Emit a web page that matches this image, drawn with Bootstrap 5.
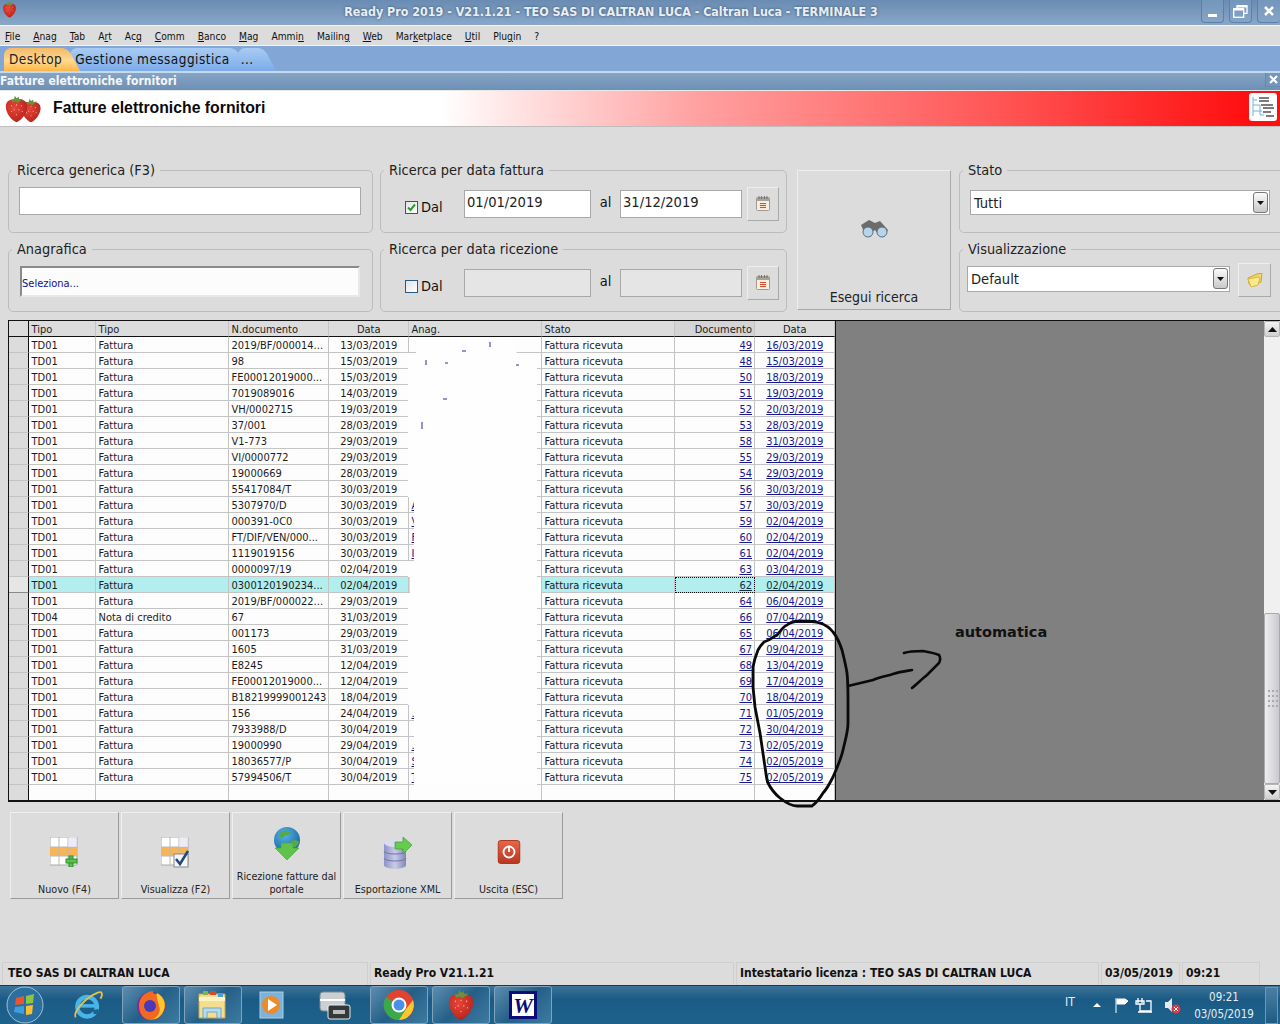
<!DOCTYPE html>
<html lang="it">
<head>
<meta charset="UTF-8">
<meta name="viewport" content="width=device-width, initial-scale=1">
<title>Ready Pro 2019 - Fatture elettroniche fornitori</title>
<link href="https://cdn.jsdelivr.net/npm/bootstrap@5.3.2/dist/css/bootstrap.min.css" rel="stylesheet">
<style>
  html, body { margin: 0; height: 100%; overflow: hidden; }
  body { background: #dcdcdc; color: #111; font-family: "DejaVu Sans Condensed", "DejaVu Sans", sans-serif; font-stretch: condensed; font-size: 11px; }
  .app { position: relative; width: 1280px; height: 1024px; overflow: hidden; }

  /* barra titolo */
  .titlebar { height: 25px; background: linear-gradient(#6a8cb2, #8aa7c8); position: relative; }
  .titlebar .app-icon { position: absolute; left: 2px; top: 1px; }
  .titlebar .caption { width: 1222px; text-align: center; color: #e9eef3; font: bold 12.4px/24px "DejaVu Sans Condensed", "DejaVu Sans", sans-serif; text-shadow: 0 0 3px #33506f; }
  .win-btns { position: absolute; right: 0; top: 0; gap: 5px; }
  .win-btns span { width: 23px; height: 23px; border: 1px solid #5f80a4; border-top: 0; border-radius: 0 0 4px 4px; background: linear-gradient(#7396bb, #86a4c6); display: flex; align-items: center; justify-content: center; }

  .menubar { height: 21px; background: #dcdcdc; border-top: 1px solid #f4f4f4; border-bottom: 1px solid #f4f4f4; padding: 1px 0 0 5px; gap: 13px; font-size: 10.2px; line-height: 19px; }
  .menubar u { text-underline-offset: 1px; }

  .tabbar { height: 25px; background: #82a6d5; padding: 2px 0 0 4px; }
  .tabbar .tab { position: relative; height: 23px; padding: 0 5px; margin-right: 3px; border-radius: 7px 8px 0 0; font: 13.5px/23px "DejaVu Sans Condensed", "DejaVu Sans", sans-serif; letter-spacing: .45px; background: linear-gradient(#a8ccf2, #7cabea); }
  .tabbar .tab::after { content: ""; position: absolute; top: 0; right: -7px; width: 14px; height: 23px; background: inherit; border-top-right-radius: 6px; transform: skewX(28deg); z-index: 0; }
  .tabbar .tab span { position: relative; z-index: 1; }
  .tabbar .tab.active { background: linear-gradient(#f2b968, #ffd98f 55%, #fdb748); z-index: 2; color: #222; }
  .tabbar .tab.more { width: 25px; padding-left: 3px; }
  .sep-light { height: 2px; background: #c5d8ec; }

  .formbar { height: 18px; background: linear-gradient(#86a4c5, #6c90b5); color: #f4f6f8; font-weight: bold; font-size: 12px; line-height: 17px; position: relative; border-bottom: 1px solid #e9e9e9; }
  .formbar .close-x { position: absolute; right: 0; top: 0; width: 15px; height: 14px; display: flex; align-items: center; justify-content: center; background: #7696b9; border: 1px solid #6688ac; border-right: 0; border-top: 0; }

  .formhead { height: 36px; padding-left: 4px; background: linear-gradient(90deg, #fff 0, #fff 440px, #ffa0a0 700px, #ff5555 1000px, #ff1010 1245px); border-bottom: 1px solid #bdbdbd; position: relative; }
  .formhead h1 { margin: -2px 0 0 11px; font: bold 15.8px/1 "Liberation Sans", Arial, sans-serif; color: #0b0b0b; }
  .formhead .tree { position: absolute; right: 3px; top: 2px; background: #fff; border-radius: 3px; }

  /* filtri */
  .filters { padding: 34px 0 0 8px; gap: 7px; height: 193px; }
  .filters .c1 { width: 365px; flex: none; }
  .filters .c2 { width: 407px; flex: none; }
  .filters .c4 { width: 340px; flex: none; }
  .group { border: 1px solid #bcbcbc; border-radius: 5px; height: 72px; margin: 0 0 7px; padding: 8px 0 0 10px; min-width: 0; }
  .group legend { float: none; width: auto; margin: 0 0 0 -7px; padding: 0 5px 0 5px; font-size: 14.4px; line-height: 18px; color: #222; }
  .field { height: 28px; border: 1px solid #a8a8a8; border-radius: 0; padding: 0 2px; background: #fff; font-size: 14.6px; color: #222; box-shadow: none; }
  .field:disabled { background: #e5e5e5; }
  .field.wide { width: 342px; }
  .field.inset { width: 340px; height: 31px; margin: 0 0 0 1px; border: 2px solid #e8e8e8; border-top-color: #8a8a8a; border-left-color: #8a8a8a; font-size: 11px; color: #10108a; background: #fcfcfc; line-height: 31px; padding: 0; }
  .dates { padding-left: 14px; }
  .dates .chk { width: 59px; margin-top: 11px; gap: 3px; font-size: 14.5px; line-height: 18px; }
  .chkbox { width: 13px; height: 13px; flex: none; border: 1px solid #2c5a7c; background: linear-gradient(135deg, #dfe3e8, #fff); display: flex; align-items: center; justify-content: center; }
  .dates .field { margin-top: 3px; }
  .dates .f1 { width: 127px; padding-bottom: 5px; }
  .dates .f2 { width: 122px; padding-bottom: 5px; }
  .dates .al { width: 29px; text-align: center; font-size: 14.5px; line-height: 24px; margin-top: 3px; }
  .raised { background: #dcdcdc; border: 1px solid; border-color: #eee #a9a9a9 #a9a9a9 #eee; padding: 0; border-radius: 0; color: #222; }
  .cal { width: 32px; height: 34px; margin-left: 5px; padding-bottom: 2px; display: flex; align-items: center; justify-content: center; }
  .search { width: 154px; height: 140px; margin: 9px 1px 0 3px; font-size: 14px; position: relative; flex: none; padding-bottom: 1px; }
  .search svg { position: absolute; left: 61px; top: 48px; }
  .combo { height: 25px; width: 300px; margin: 3px 0 0 0; border: 1px solid #a8a8a8; background: #fff; padding-left: 3px; font-size: 14.6px; line-height: 24px; justify-content: space-between; color: #222; }
  .combo .drop { width: 15px; height: 21px; margin: 1px 1px 0 0; border: 1px solid #777; border-radius: 3px; background: linear-gradient(#fafafa, #c9c9c9); display: flex; align-items: center; justify-content: center; }
  .combo.view { width: 263px; height: 26px; margin: 0; }
  .c4 .group { padding-left: 10px; }
  .c4 .group.v { padding-left: 7px; }
  .c4 .group.v legend { margin-left: -4px; }
  .folder { width: 33px; height: 34px; margin: -3px 0 0 8px; display: flex; align-items: center; justify-content: center; }

  /* griglia */
  .grid { height: 482px; margin-left: 8px; border: 1px solid #111; border-right: 0; border-bottom-width: 2px; }
  .grid .table { width: 826px; table-layout: fixed; margin: 0; border-collapse: separate; border-spacing: 0; --bs-table-bg: #fdfdfd; --bs-table-color: #1c1c1c; font-size: 11px; flex: none; }
  .grid th, .grid td { height: 16px; padding: 2px 2px 0 2.5px; line-height: 13px; font-weight: normal; border: 0; border-right: 1px solid #c4c4c4; border-bottom: 1px solid #c4c4c4; white-space: nowrap; overflow: hidden; }
  .grid thead th { background: #dcdcdc; border-bottom: 1px solid #111; border-right-color: #c4c4c4; }
  .grid .rh, .grid thead th.rh { background: #dcdcdc; border-right: 1px solid #111; padding: 0; }
  .grid .doc-head { background: #d4d4d4; }
  .grid a { color: #17178f; }
  .grid td.anag a { text-decoration: underline; }
  .grid tr.sel td { background: #b2eeee; }
  .grid tr.sel td.rh { background: #e6e6e6; border-bottom-color: #888; }
  .grid tr.sel a { color: #0c3040; }
  .grid td.focus { outline: 1px dotted #111; outline-offset: -1px; }
  .grid .blank td { height: 16px; border-bottom: 0; }
  .grid .tw { flex: none; overflow: hidden; }
  .rest { background: #808080; border-left: 1px solid #111; padding: 302px 0 0 119px; font: bold 14.5px/18px "DejaVu Sans", sans-serif; color: #111; }
  .vscroll { width: 16px; flex: none; background: #f0f0f0; }
  .vscroll .arrow { height: 16px; background: linear-gradient(#f4f4f4, #cfcfcf); border: 1px solid #b5b5b5; border-radius: 2px; display: flex; align-items: center; justify-content: center; }
  .vscroll .thumb { height: 171px; background: linear-gradient(90deg, #eeeef0, #c9c9d0); border: 1px solid #aaa; border-radius: 2px; display: flex; align-items: center; justify-content: center; }

  /* pulsanti */
  .actions { padding: 10px 0 0 10px; gap: 2px; }
  .actions .raised { width: 109px; height: 87px; font-size: 10.7px; line-height: 13px; padding: 0 2px 2px; position: relative; border-color: #efefef #9a9a9a #9a9a9a #efefef; display: flex; align-items: flex-end; justify-content: center; }
  .actions svg { position: absolute; left: 50%; transform: translateX(-50%); top: 24px; }
  .actions svg.globe { top: 14px; }
  .actions svg.pow { top: 27px; }

  /* stato */
  .statusbar { height: 23px; padding-left: 2px; gap: 2px; font: bold 12px/21px "DejaVu Sans Condensed", "DejaVu Sans", sans-serif; color: #111; }
  .statusbar div { border: 1px solid #cfcfcf; border-bottom: 0; padding-left: 3px; flex: none; }
  .statusbar .s1 { width: 366px; padding-left: 5px; } .s2 { width: 364px; } .s3 { width: 363px; } .s4 { width: 79px; } .s5 { width: 78px; }

  /* barra applicazioni */
  .taskbar { height: 39px; flex: none; background: linear-gradient(#3d7398, #1a5b85 35%, #1e638d); border-top: 1px solid #0f3c5c; position: relative; padding-left: 6px; color: #e6eef5; }
  .taskbar .slot { height: 38px; flex: none; display: flex; align-items: center; justify-content: center; }
  .taskbar .on { border: 1px solid #7fa3bd; border-radius: 3px; background: linear-gradient(135deg, #5d8db0, #245f88 50%, #3e7ba0); width: 58px; margin-right: 4px; }
  .taskbar .orb { width: 38px; }
  .taskbar .ie { width: 64px; margin: 0 2px 0 12px; }
  .taskbar .media { width: 50px; margin-right: 4px; }
  .taskbar .print { width: 70px; }
  .tray { gap: 0; position: absolute; right: 0; top: 0; height: 38px; }
  .tray .lang { font-size: 12px; width: 27px; margin-top: -6px; }
  .tray .clock { width: 76px; text-align: center; font-size: 11.5px; line-height: 17px; margin-left: -6px; padding-top: 1px; }
  .tray .show { width: 13px; height: 37px; margin: 0 2px 0 3px; border: 1px solid #6e97b4; background: linear-gradient(#4a7fa3, #205b84); }
  .overlay { position: absolute; left: 0; top: 0; pointer-events: none; }
</style>
</head>
<body>
<svg width="0" height="0" class="position-absolute">
  <defs>
    <radialGradient id="berryFill" cx=".4" cy=".35" r=".8"><stop offset="0" stop-color="#e8453a"/><stop offset=".7" stop-color="#bf2a20"/><stop offset="1" stop-color="#7e1510"/></radialGradient>
    <linearGradient id="cyl" x1="0" x2="1"><stop offset="0" stop-color="#8f93c6"/><stop offset=".5" stop-color="#c9cbe6"/><stop offset="1" stop-color="#8286b8"/></linearGradient>
    <radialGradient id="globe" cx=".4" cy=".3" r=".8"><stop offset="0" stop-color="#55b3ee"/><stop offset="1" stop-color="#12608f"/></radialGradient>
    <linearGradient id="power" x1="0" y1="0" x2="0" y2="1"><stop offset="0" stop-color="#e8674a"/><stop offset="1" stop-color="#b8361f"/></linearGradient>
    <symbol id="berry" viewBox="0 0 30 34">
      <path d="M15 6C8 4 2 7 2 14c0 8 7 17 13 19 6-2 13-11 13-19 0-7-6-10-13-8z" fill="url(#berryFill)"/>
      <path d="M8 6l4-1 1-4 2 3 3-2 0 3 5 0-4 3-3 2-2-2-4 1z" fill="#6f8f3c"/>
      <g fill="#f6c9a8"><circle cx="9" cy="13" r=".7"/><circle cx="15" cy="12" r=".7"/><circle cx="21" cy="13" r=".7"/><circle cx="12" cy="18" r=".7"/><circle cx="18" cy="18" r=".7"/><circle cx="9" cy="20" r=".7"/><circle cx="22" cy="20" r=".7"/><circle cx="15" cy="24" r=".7"/></g>
    </symbol>
    <symbol id="calendar" viewBox="0 0 14 15">
      <rect x=".5" y="1.5" width="13" height="13" rx="1" fill="#f5efe6" stroke="#a09a90"/>
      <rect x="1" y="2" width="12" height="3" fill="#a8a298"/>
      <path d="M3 0v3M5.500 0v3M8.500 0v3M11 0v3" stroke="#666" stroke-width=".8"/>
      <path d="M3.500 7h7v5.500h-7z" fill="#f9dcc4"/>
      <path d="M4 7.500h6M4 9.500h6M4 11.500h6" stroke="#d2542c" stroke-width="1"/>
    </symbol>
    <symbol id="tablegrid" viewBox="0 0 28 29">
      <path d="M0 0h27v28H0z" fill="#fff" stroke="#aaa"/>
      <path d="M0 10h27v9H0z" fill="#f7b55a"/>
      <path d="M9 0v28M18 0v28M0 10h27M0 19h27" stroke="#b8b8b8"/>
      <path d="M18 0h9v10h-9z" fill="#e2e4f4" opacity=".7"/>
    </symbol>
  </defs>
</svg>

<div class="app d-flex flex-column">
  <div class="titlebar flex-none">
    <svg class="app-icon" width="15" height="17"><use href="#berry"/></svg>
    <div class="caption">Ready Pro 2019 - V21.1.21 - TEO SAS DI CALTRAN LUCA - Caltran Luca - TERMINALE 3</div>
    <div class="win-btns d-flex">
      <span><svg width="11" height="11"><rect x="1" y="8" width="9" height="3" fill="#fff"/></svg></span>
      <span><svg width="15" height="13" fill="none" stroke="#fff" stroke-width="1.300"><rect x=".7" y="3.700" width="10" height="8.600"/><path d="M4 3V.7h10v7.600h-3" /><path d="M.7 4.500h10M4 1.500h10" stroke-width="2"/></svg></span>
      <span class="border-end-0"><svg width="10" height="10" stroke="#fff" stroke-width="2.500"><path d="M1 1l8 8M9 1l-8 8"/></svg></span>
    </div>
  </div>

  <nav class="menubar d-flex flex-none">
    <span><u>F</u>ile</span><span><u>A</u>nag</span><span><u>T</u>ab</span><span>A<u>r</u>t</span><span>Ac<u>q</u></span><span><u>C</u>omm</span><span><u>B</u>anco</span><span><u>M</u>ag</span><span>Ammi<u>n</u></span><span>Mailin<u>g</u></span><span><u>W</u>eb</span><span>Mar<u>k</u>etplace</span><span><u>U</u>til</span><span>Plu<u>g</u>in</span><span>?</span>
  </nav>

  <div class="tabbar d-flex flex-none">
    <div class="tab active"><span>Desktop</span></div>
    <div class="tab"><span>Gestione messaggistica</span></div>
    <div class="tab more"><span>...</span></div>
  </div>
  <div class="sep-light flex-none"></div>

  <div class="formbar flex-none ps-0">Fatture elettroniche fornitori
    <span class="close-x"><svg width="9" height="9" stroke="#fff" stroke-width="2.200"><path d="M1 1l7 7M8 1l-7 7"/></svg></span>
  </div>

  <div class="formhead d-flex align-items-center flex-none">
    <svg width="38" height="28" viewBox="0 0 38 28"><use href="#berry" x="14" y="3" width="26" height="25"/><use href="#berry" x="0" y="0" width="25" height="28"/></svg>
    <h1>Fatture elettroniche fornitori</h1>
    <svg class="tree" width="28" height="28" viewBox="0 0 28 28" fill="none">
      <path d="M4 4v19M4 7h4M4 12h7M4 18h9M11 12v10h4" stroke="#70b4d8"/>
      <path d="M10 5h10M10 8h10M12 12h12M14 15h11M14 19h8M17 23h8" stroke="#7c7c7c" stroke-width="2"/>
    </svg>
  </div>

  <div class="filters d-flex flex-none">
    <div class="c1">
      <fieldset class="group">
        <legend>Ricerca generica (F3)</legend>
        <input class="form-control field wide" type="text" aria-label="Ricerca generica">
      </fieldset>
      <fieldset class="group">
        <legend>Anagrafica</legend>
        <div class="field inset">Seleziona...</div>
      </fieldset>
    </div>
    <div class="c2">
      <fieldset class="group">
        <legend>Ricerca per data fattura</legend>
        <div class="dates d-flex align-items-start">
          <label class="chk d-flex align-items-center"><span class="chkbox"><svg width="9" height="9" fill="none" stroke="#2f9a33" stroke-width="2"><path d="M1 4.500l2.500 2.500L8 1.500"/></svg></span>Dal</label>
          <input class="form-control field f1" type="text" value="01/01/2019" aria-label="Dal">
          <span class="al">al</span>
          <input class="form-control field f2" type="text" value="31/12/2019" aria-label="Al">
          <button type="button" class="raised cal" aria-label="Calendario"><svg width="14" height="15"><use href="#calendar"/></svg></button>
        </div>
      </fieldset>
      <fieldset class="group">
        <legend>Ricerca per data ricezione</legend>
        <div class="dates d-flex align-items-start">
          <label class="chk d-flex align-items-center"><span class="chkbox"></span>Dal</label>
          <input class="form-control field f1" type="text" disabled aria-label="Dal">
          <span class="al">al</span>
          <input class="form-control field f2" type="text" disabled aria-label="Al">
          <button type="button" class="raised cal" aria-label="Calendario"><svg width="14" height="15"><use href="#calendar"/></svg></button>
        </div>
      </fieldset>
    </div>
    <button type="button" class="raised search d-flex align-items-end justify-content-center">
      <svg width="30" height="22" viewBox="0 0 30 22"><path d="M2 6l8-5 6 3 5-2 8 9-4 7-6-3-3-4-3 2-1 5-6-3z" fill="#6c6c6c"/><circle cx="9" cy="13" r="5" fill="#b9d3ea" stroke="#5b6f82"/><circle cx="23" cy="13" r="5" fill="#b9d3ea" stroke="#5b6f82"/></svg>
      Esegui ricerca
    </button>
    <div class="c4">
      <fieldset class="group">
        <legend>Stato</legend>
        <div class="combo d-flex">Tutti<span class="drop"><svg width="7" height="4"><path d="M0 0h7L3.500 4z" fill="#111"/></svg></span></div>
      </fieldset>
      <fieldset class="group v">
        <legend>Visualizzazione</legend>
        <div class="d-flex">
          <div class="combo view d-flex">Default<span class="drop"><svg width="7" height="4"><path d="M0 0h7L3.500 4z" fill="#111"/></svg></span></div>
          <button type="button" class="raised folder" aria-label="Apri"><svg width="16" height="14" viewBox="0 0 16 14"><path d="M1 5l9-4 5-1-1 9-9 5-3-3z" fill="#f5d860" stroke="#c9a63a"/><path d="M1 6l10-2 2 1-2 7-7 2z" fill="#fbe98d" stroke="#d9b545"/></svg></button>
        </div>
      </fieldset>
    </div>
  </div>

  <div class="grid d-flex flex-none">
    <div class="tw">
      <table class="table">
        <colgroup><col width="20"><col width="67"><col width="133"><col width="100"><col width="80"><col width="133"><col width="133"><col width="80"><col width="80"></colgroup>
        <thead>
          <tr><th class="rh"></th><th>Tipo</th><th>Tipo</th><th>N.documento</th><th class="text-center">Data</th><th>Anag.</th><th>Stato</th><th class="text-end doc-head">Documento</th><th class="text-center">Data</th></tr>
        </thead>
        <tbody id="righe"></tbody>
      </table>
    </div>
    <div class="rest flex-grow-1">automatica</div>
    <div class="vscroll d-flex flex-column">
      <div class="arrow"><svg width="9" height="5"><path d="M0 5h9L4.500 0z" fill="#111"/></svg></div>
      <div class="flex-grow-1"></div>
      <div class="thumb"><svg width="12" height="20" fill="#aaa"><path d="M2 1h2v2H2zM6 1h2v2H6zM10 1h2v2h-2zM2 6h2v2H2zM6 6h2v2H6zM10 6h2v2h-2zM2 11h2v2H2zM6 11h2v2H6zM10 11h2v2h-2zM2 16h2v2H2zM6 16h2v2H6zM10 16h2v2h-2z"/></svg></div>
      <div class="arrow"><svg width="9" height="5"><path d="M0 0h9L4.500 5z" fill="#111"/></svg></div>
    </div>
  </div>

  <div class="actions d-flex flex-none">
    <button type="button" class="raised"><svg width="30" height="30" viewBox="0 0 30 30"><use href="#tablegrid" width="28" height="29"/><rect x="19" y="19" width="4" height="11" fill="#5fc04a" stroke="#2f8f2c"/><rect x="16" y="22" width="11" height="4" fill="#5fc04a" stroke="#2f8f2c"/></svg>Nuovo (F4)</button>
    <button type="button" class="raised"><svg width="30" height="31" viewBox="0 0 30 31"><use href="#tablegrid" width="28" height="29"/><rect x="13" y="17" width="14" height="13" fill="#f6f6f6" stroke="#888"/><path d="M15 22l4 5 8-13" fill="none" stroke="#25477f" stroke-width="2.500"/></svg>Visualizza (F2)</button>
    <button type="button" class="raised"><svg class="globe" width="28" height="34" viewBox="0 0 28 34"><circle cx="14" cy="13" r="13" fill="url(#globe)"/><path d="M6 7c4-5 10-4 12-1-2 3-6 1-7 4-2 2-4 1-5-3zM18 14c3-1 7-1 8 1-1 4-4 6-6 5z" fill="#56a84c"/><path d="M8 16h12v5h6L14 33 2 21h6z" fill="#5fc24a" stroke="#4aa23a" stroke-width=".6"/></svg>Ricezione fatture dal portale</button>
    <button type="button" class="raised"><svg width="30" height="34" viewBox="0 0 30 34"><path d="M1 6v22c0 5 22 5 22 0V6z" fill="url(#cyl)"/><ellipse cx="12" cy="6" rx="11" ry="4" fill="#dcdcf0"/><path d="M1 14c0 4 22 4 22 0M1 21c0 4 22 4 22 0" fill="none" stroke="#7175a9"/><path d="M12 5h8V0l9 8-9 9v-5h-8z" fill="#66cc4d" stroke="#3f9a33" stroke-width=".7"/></svg>Esportazione XML</button>
    <button type="button" class="raised"><svg class="pow" width="23" height="24" viewBox="0 0 23 24"><rect x=".5" y=".5" width="22" height="23" rx="3" fill="url(#power)" stroke="#a93a22"/><circle cx="11.500" cy="12" r="5.500" fill="none" stroke="#fff" stroke-width="1.800"/><path d="M11.500 6v6" stroke="#fff" stroke-width="1.800"/></svg>Uscita (ESC)</button>
  </div>

  <div class="flex-grow-1"></div>

  <div class="statusbar d-flex flex-none">
    <div class="s1">TEO SAS DI CALTRAN LUCA</div>
    <div class="s2">Ready Pro V21.1.21</div>
    <div class="s3">Intestatario licenza : TEO SAS DI CALTRAN LUCA</div>
    <div class="s4">03/05/2019</div>
    <div class="s5">09:21</div>
  </div>

  <div class="taskbar d-flex">
    <div class="slot orb"><svg width="38" height="38" viewBox="0 0 38 38"><circle cx="19" cy="19" r="18" fill="#2a6f9f" stroke="#9fc2d8"/><path d="M10 12l8-2v8l-9 1z" fill="#e8552f"/><path d="M20 10l8-2-1 9-7 1z" fill="#8cc63f"/><path d="M9 21l9-1v8l-10-2z" fill="#3c9fe0"/><path d="M20 20l7-1-1 9-6 1z" fill="#fbc02d"/></svg></div>
    <div class="slot ie"><svg width="32" height="32" viewBox="0 0 36 34"><ellipse cx="17" cy="19" rx="11" ry="11" fill="none" stroke="#49b4ea" stroke-width="5"/><path d="M7 18h22" stroke="#49b4ea" stroke-width="4"/><path d="M24 25l6-1" stroke="#1e638d" stroke-width="5"/><path d="M4 31C1 24 16 8 29 3c5-2 6 2 3 7" fill="none" stroke="#e5c14c" stroke-width="2"/></svg></div>
    <div class="slot on"><svg width="32" height="32" viewBox="0 0 32 32"><circle cx="16" cy="17" r="14" fill="#7d2a9e"/><path d="M4 17C4 8 10 3 18 2c-1 3 2 3 5 3 5 3 8 7 7 13-1 8-7 13-14 13S4 25 4 17z" fill="#f26a22"/><path d="M22 4c6 3 9 10 7 16-2 6-6 10-11 10 6-3 8-8 6-13-1-5-3-8-2-13z" fill="#fdc72f"/><circle cx="15" cy="17" r="6" fill="#4a3ab8"/></svg></div>
    <div class="slot on"><svg width="34" height="32" viewBox="0 0 34 32"><path d="M3 5h26v24H3z" fill="#f4dd8f" stroke="#c8a94e"/><path d="M3 10h26" stroke="#fff3c4" stroke-width="4"/><path d="M7 2h5v4H7z" fill="#79b851"/><path d="M14 2h6v4h-6z" fill="#d24c2c"/><path d="M22 4h5v4h-5z" fill="#4d9dd2"/><path d="M7 29V19h18v10h-4v-6H11v6z" fill="#b7dcee" stroke="#6ba7c8"/></svg></div>
    <div class="slot media"><svg width="27" height="28" viewBox="0 0 27 28"><rect x="2" y="1" width="23" height="26" fill="#7fb2d8" stroke="#a9cfe6"/><circle cx="13" cy="14" r="9" fill="#f08a24"/><path d="M10 8l9 6-9 6z" fill="#fff"/></svg></div>
    <div class="slot print"><svg width="32" height="32" viewBox="0 0 32 32"><rect x="1" y="3" width="25" height="19" rx="3" fill="#c9cfd2" stroke="#7e8a90"/><path d="M1 11h25" stroke="#fff" stroke-width="2"/><rect x="9" y="16" width="22" height="14" rx="2" fill="#33383b" stroke="#eee"/><rect x="14" y="21" width="12" height="4" fill="#bbb"/></svg></div>
    <div class="slot on"><svg width="32" height="32" viewBox="0 0 32 32"><circle cx="16" cy="16" r="15" fill="#e2432f"/><path d="M16 16L3 24A15 15 0 0 1 3 8z" fill="#3ba84a"/><path d="M16 31A15 15 0 0 1 3 24l6-9 7 1 7 4z" fill="#3ba84a"/><path d="M16 31l7-11 7-9A15 15 0 0 1 16 31z" fill="#fbc72c"/><circle cx="16" cy="16" r="7.500" fill="#fff"/><circle cx="16" cy="16" r="5.500" fill="#4a8fe8"/></svg></div>
    <div class="slot on"><svg width="28" height="34" viewBox="0 0 30 34"><use href="#berry"/></svg></div>
    <div class="slot on"><svg width="28" height="30" viewBox="0 0 28 30"><rect x="0" y="1" width="28" height="28" fill="#0b0b7a"/><rect x="3" y="4" width="22" height="22" fill="#fff"/><text x="14" y="23" text-anchor="middle" font-family="Liberation Serif" font-weight="bold" font-style="italic" font-size="22" fill="#0b0b7a">W</text></svg></div>
    <div class="tray d-flex align-items-center">
      <span class="lang">IT</span>
      <svg width="100" height="20" viewBox="0 0 100 20" fill="none"><path d="M1 12l4-4 4 4z" fill="#fff"/><path d="M24 3v15M25 4h8l3 2-3 3h-8z" stroke="#fff" fill="#fff"/><path d="M46 3v5M50 3v5M44 6h8v3h-8zM48 9v7h11V6h-5M46 17h14" stroke="#fff" stroke-width="1.300"/><path d="M73 7h3l4-4v14l-4-4h-3z" fill="#e3e9ee"/><circle cx="84" cy="14" r="4.500" fill="#d63d46"/><path d="M82 12l4 4M86 12l-4 4" stroke="#fff"/></svg>
      <span class="clock">09:21<br>03/05/2019</span>
      <span class="show"></span>
    </div>
  </div>

  <svg class="overlay" width="1280" height="1024" viewBox="0 0 1280 1024" fill="none">
    <path d="M416 337H500L516 345 517 358 537 360V577H541V593H537V785H414V705H408V593H410V577H408V561H414V497H408V353H416z" fill="#fefefe"/>
    <g stroke="#2b2b9a"><path d="M462 351h4M490 342v5M426 360v5M445 363h3M516 365h3M443 399h4M422 422v7"/></g>
    <path d="M764 642C771 640 774 636 777 635 781 630 784 626 787 625 791 622 796 621 800 621 807 621 814 621 820 623 826 625 830 628 833 632 838 638 840 644 842 650 844 658 846 666 847 673 848 682 848 691 848 700V723C848 732 845 741 843 750 841 759 837 768 833 777 830 783 827 789 823 793 820 798 816 803 812 806H797C791 806 785 802 780 798 775 794 771 789 768 783 766 778 766 772 765 767L760 733 755 707 753 687V667C754 661 756 655 758 650 760 646 762 644 764 642Z" stroke="#0a0a0a" stroke-width="2.800"/>
    <path d="M848 686C856 684 865 682 873 680 880 677 887 676 893 674 899 672 906 671 912 670M904 653C910 651 916 651 923 651 929 652 934 653 939 655 941 658 940 661 939 663 935 667 931 671 927 675 922 679 917 684 912 688" stroke="#0a0a0a" stroke-width="2.600" stroke-linecap="round"/>
  </svg>
</div>

<script>
  // righe griglia: tipo, descrizione, n.documento, data, protocollo, data ricezione, iniziale anag.
  const righe = [
    ["TD01","Fattura","2019/BF/000014...","13/03/2019","49","16/03/2019"],
    ["TD01","Fattura","98","15/03/2019","48","15/03/2019"],
    ["TD01","Fattura","FE00012019000...","15/03/2019","50","18/03/2019"],
    ["TD01","Fattura","7019089016","14/03/2019","51","19/03/2019"],
    ["TD01","Fattura","VH/0002715","19/03/2019","52","20/03/2019"],
    ["TD01","Fattura","37/001","28/03/2019","53","28/03/2019"],
    ["TD01","Fattura","V1-773","29/03/2019","58","31/03/2019"],
    ["TD01","Fattura","VI/0000772","29/03/2019","55","29/03/2019"],
    ["TD01","Fattura","19000669","28/03/2019","54","29/03/2019"],
    ["TD01","Fattura","55417084/T","30/03/2019","56","30/03/2019"],
    ["TD01","Fattura","5307970/D","30/03/2019","57","30/03/2019","A"],
    ["TD01","Fattura","000391-0C0","30/03/2019","59","02/04/2019","V"],
    ["TD01","Fattura","FT/DIF/VEN/000...","30/03/2019","60","02/04/2019","F"],
    ["TD01","Fattura","1119019156","30/03/2019","61","02/04/2019","I"],
    ["TD01","Fattura","0000097/19","02/04/2019","63","03/04/2019"],
    ["TD01","Fattura","0300120190234...","02/04/2019","62","02/04/2019"],
    ["TD01","Fattura","2019/BF/000022...","29/03/2019","64","06/04/2019"],
    ["TD04","Nota di credito","67","31/03/2019","66","07/04/2019"],
    ["TD01","Fattura","001173","29/03/2019","65","06/04/2019"],
    ["TD01","Fattura","1605","31/03/2019","67","09/04/2019"],
    ["TD01","Fattura","E8245","12/04/2019","68","13/04/2019"],
    ["TD01","Fattura","FE00012019000...","12/04/2019","69","17/04/2019"],
    ["TD01","Fattura","B18219999001243","18/04/2019","70","18/04/2019"],
    ["TD01","Fattura","156","24/04/2019","71","01/05/2019","."],
    ["TD01","Fattura","7933988/D","30/04/2019","72","30/04/2019"],
    ["TD01","Fattura","19000990","29/04/2019","73","02/05/2019","."],
    ["TD01","Fattura","18036577/P","30/04/2019","74","02/05/2019","S"],
    ["TD01","Fattura","57994506/T","30/04/2019","75","02/05/2019","T"]
  ];
  const SELEZIONATA = 15;
  let html = "";
  righe.forEach(function (r, i) {
    html += '<tr' + (i === SELEZIONATA ? ' class="sel"' : '') + '>' +
      '<td class="rh"></td><td>' + r[0] + '</td><td>' + r[1] + '</td><td>' + r[2] + '</td>' +
      '<td class="text-center">' + r[3] + '</td>' +
      '<td class="anag">' + (r[6] ? '<a href="#">' + r[6] + '</a>' : '') + '</td>' +
      '<td>Fattura ricevuta</td>' +
      '<td class="text-end' + (i === SELEZIONATA ? ' focus' : '') + '"><a href="#">' + r[4] + '</a></td>' +
      '<td class="text-center"><a href="#">' + r[5] + '</a></td></tr>';
  });
  html += '<tr class="blank"><td class="rh"></td><td></td><td></td><td></td><td></td><td></td><td></td><td></td><td></td></tr>';
  document.getElementById("righe").innerHTML = html;
</script>
<script src="https://cdn.jsdelivr.net/npm/bootstrap@5.3.2/dist/js/bootstrap.bundle.min.js"></script>
</body>
</html>
